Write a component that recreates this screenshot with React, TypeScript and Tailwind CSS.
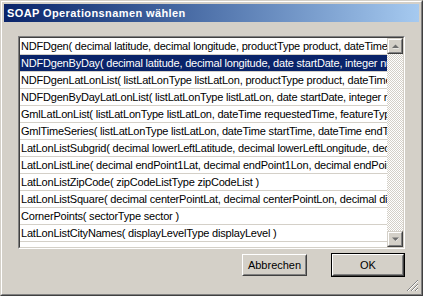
import React from "react";

const rows = [
  "NDFDgen( decimal latitude, decimal longitude, productType product, dateTime startTime, dateTime endTime, weatherParametersType weatherParameters )",
  "NDFDgenByDay( decimal latitude, decimal longitude, date startDate, integer numDays, formatType format )",
  "NDFDgenLatLonList( listLatLonType listLatLon, productType product, dateTime startTime, dateTime endTime )",
  "NDFDgenByDayLatLonList( listLatLonType listLatLon, date startDate, integer numDays, formatType format )",
  "GmlLatLonList( listLatLonType listLatLon, dateTime requestedTime, featureType featureType )",
  "GmlTimeSeries( listLatLonType listLatLon, dateTime startTime, dateTime endTime, compTypeType compType )",
  "LatLonListSubgrid( decimal lowerLeftLatitude, decimal lowerLeftLongitude, decimal upperRightLatitude )",
  "LatLonListLine( decimal endPoint1Lat, decimal endPoint1Lon, decimal endPoint2Lat, decimal endPoint2Lon )",
  "LatLonListZipCode( zipCodeListType zipCodeList )",
  "LatLonListSquare( decimal centerPointLat, decimal centerPointLon, decimal distanceLat, decimal distanceLon )",
  "CornerPoints( sectorType sector )",
  "LatLonListCityNames( displayLevelType displayLevel )",
  "",
];

const font = { fontFamily: '"Liberation Sans", Arial, sans-serif' };

const ScrollButton = ({ up }: { up: boolean }) => (
  <div className="h-[16px] w-[16px] border border-t-[#d4d0c8] border-l-[#d4d0c8] border-b-[#404040] border-r-[#404040] bg-[#d4d0c8]">
    <div className="flex h-full w-full items-center justify-center border border-t-white border-l-white border-b-[#808080] border-r-[#808080]">
      <svg width="7" height="5" viewBox="0 0 7 5">
        {up ? (
          <>
            <path d="M1 4.5h6L4 1.5z" fill="#fff" />
            <path d="M0 4h7L3.5 0.5z" fill="#6e6e6e" />
          </>
        ) : (
          <>
            <path d="M1 1h6L4 4.5z" fill="#fff" />
            <path d="M0 0.5h7L3.5 4z" fill="#6e6e6e" />
          </>
        )}
      </svg>
    </div>
  </div>
);

export default function App() {
  return (
    <div className="h-[296px] w-[423px] bg-[#d4d0c8]" style={font}>
      <div className="h-full w-full border border-t-[#d4d0c8] border-l-[#d4d0c8] border-b-[#404040] border-r-[#404040]">
        <div className="flex h-full w-full flex-col border border-t-white border-l-white border-b-[#808080] border-r-[#808080] p-[2px]">
          <div className="flex h-[18px] shrink-0 items-center bg-gradient-to-r from-[#0a246a] to-[#a6caf0] pl-[3px] text-[11px] font-bold tracking-[0.4px] text-white">
            SOAP Operationsnamen wählen
          </div>

          <div className="relative flex flex-1 flex-col px-[14px] pt-[14px]">
            <div className="h-[213px] border border-t-[#808080] border-l-[#808080] border-b-white border-r-white">
              <div className="flex h-full border border-t-[#404040] border-l-[#404040] border-b-[#d4d0c8] border-r-[#d4d0c8] bg-white">
                <div className="flex-1 overflow-hidden">
                  {rows.map((r, i) => (
                    <div
                      key={i}
                      className={
                        i === 1
                          ? "h-[17px] whitespace-nowrap border-b border-[#d4d0c8] bg-[#0a246a] pl-[1px] text-[11px] leading-[16px] tracking-[-0.2px] text-white"
                          : "h-[17px] whitespace-nowrap border-b border-[#d4d0c8] pl-[1px] text-[11px] leading-[16px] tracking-[-0.2px] text-black"
                      }
                    >
                      {r}
                    </div>
                  ))}
                </div>
                <div className="flex w-[16px] flex-col">
                  <ScrollButton up />
                  <div className="flex-1 bg-[repeating-conic-gradient(#d4d0c8_0_25%,#ffffff_0_50%)] bg-[length:2px_2px]" />
                  <ScrollButton up={false} />
                </div>
              </div>
            </div>

            <div className="mt-[4px] flex justify-end gap-[24px]">
              <button className="mt-[1px] h-[22px] w-[65px] border border-t-white border-l-white border-b-[#404040] border-r-[#404040] bg-[#d4d0c8]">
                <div className="flex h-full w-full items-center justify-center border border-t-[#d4d0c8] border-l-[#d4d0c8] border-b-[#808080] border-r-[#808080] text-[11px] text-black">
                  Abbrechen
                </div>
              </button>
              <button className="h-[24px] w-[74px] border border-black bg-[#d4d0c8]">
                <div className="h-full w-full border border-t-white border-l-white border-b-[#404040] border-r-[#404040]">
                  <div className="flex h-full w-full items-center justify-center border border-t-[#d4d0c8] border-l-[#d4d0c8] border-b-[#808080] border-r-[#808080] text-[11px] text-black">
                    OK
                  </div>
                </div>
              </button>
            </div>

            <svg className="absolute bottom-0 right-0" width="13" height="13" viewBox="0 0 13 13">
              <path d="M12 1L1 12M12 5L5 12M12 9L9 12" stroke="#808080" strokeWidth="1" />
              <path d="M12 2L2 12M12 6L6 12M12 10L10 12" stroke="#fff" strokeWidth="1" />
            </svg>
          </div>
        </div>
      </div>
    </div>
  );
}
